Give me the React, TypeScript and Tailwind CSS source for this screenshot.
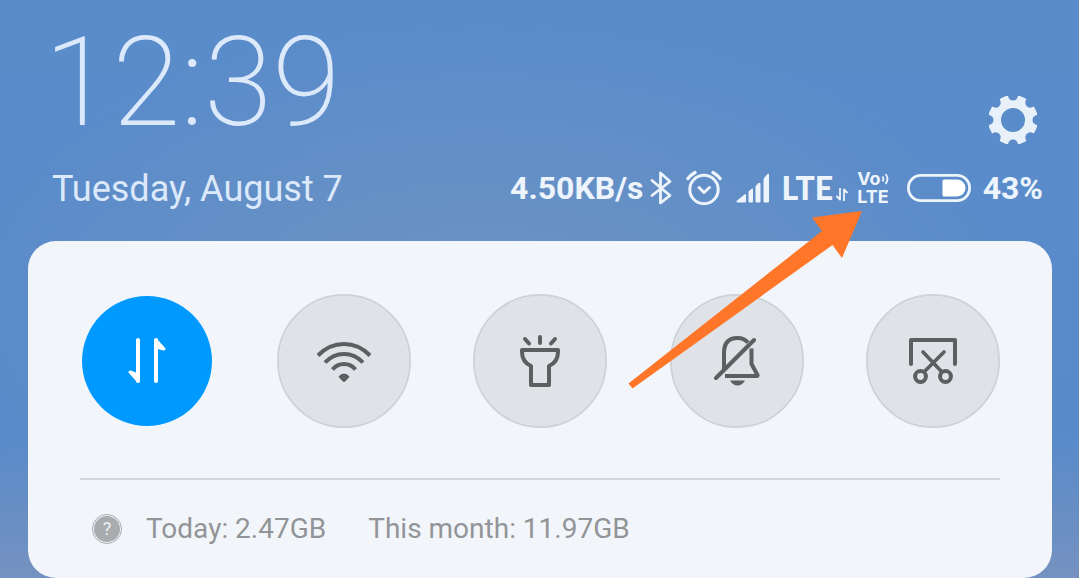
import React from "react";

type IconProps = {
  className?: string;
};

const BluetoothIcon = ({ className }: IconProps) => (
  <svg className={className} viewBox="0 0 22 34" fill="none" stroke="currentColor" strokeWidth="2.8" strokeLinejoin="round" strokeLinecap="round" aria-hidden="true">
    <path d="M2 9.5 20 24.5 10.500 32V2L20 10.5 2 24.5" />
  </svg>
);

const AlarmIcon = ({ className }: IconProps) => (
  <svg className={className} viewBox="0 0 36 36" fill="none" stroke="currentColor" strokeWidth="3" strokeLinecap="round" strokeLinejoin="round" aria-hidden="true">
    <circle cx="18" cy="19.5" r="14.2" />
    <path d="M2 8.5Q4.500 5 9 2.500M34 8.500Q31.500 5 27 2.500" strokeWidth="3.400" />
    <path d="M13 17.500 18 22.500 23.500 17.500" />
  </svg>
);

const SignalIcon = ({ className }: IconProps) => (
  <svg className={className} viewBox="0 0 34 30" fill="currentColor" aria-hidden="true">
    <path d="M1 27.500 8.500 21.500Q10 20.500 10 22V28.500Q10 29.500 9 29.500H2Q-.5 29.500 1 27.500Z" />
    <path d="M12.500 19Q12.500 18 13.500 17.500L15.500 16Q17 15 17 16.500V28.500Q17 29.500 16 29.500H13.500Q12.500 29.500 12.500 28.500Z" />
    <path d="M19.500 14Q19.500 13 20.500 12L22.500 10Q24.500 9 24.500 11V28.500Q24.500 29.500 23.500 29.500H20.500Q19.500 29.500 19.500 28.500Z" />
    <path d="M27.500 7Q27.500 5.500 28.500 4.500L31 1.500Q33 0 33 2V28.500Q33 29.500 32 29.500H28.500Q27.500 29.500 27.500 28.500Z" />
  </svg>
);

const DataArrowsIcon = ({ className }: IconProps) => (
  <svg className={className} viewBox="0 0 38 48" fill="currentColor" stroke="currentColor" strokeLinejoin="round" strokeLinecap="round" aria-hidden="true">
    <path d="M10 3V44" strokeWidth="4" />
    <path d="M10 44 2 35 10 38Z" strokeWidth="3" />
    <path d="M28 3V44" strokeWidth="4" />
    <path d="M28 3 36 12 28 10Z" strokeWidth="3" />
  </svg>
);

const SmallArrowsIcon = ({ className }: IconProps) => (
  <svg className={className} viewBox="0 0 14 13" fill="none" stroke="currentColor" strokeWidth="1.800" strokeLinejoin="round" aria-hidden="true">
    <path d="M5 0V11.500L1.500 8M9 13V1.500L12.500 5" />
  </svg>
);

const BatteryIcon = ({ className }: IconProps) => (
  <svg className={className} viewBox="0 0 64 28" fill="none" aria-hidden="true">
    <rect x="1.400" y="1.400" width="61.200" height="25.200" rx="12.600" stroke="currentColor" strokeWidth="2.800" />
    <path d="M37 5.500H50A8.500 8.500 0 0 1 50 22.500H37Q35.500 22.500 35.500 21V7Q35.500 5.500 37 5.500Z" fill="white" />
  </svg>
);

// eight teeth with scooped gaps between them
const GearIcon = ({ className }: IconProps) => (
  <svg className={className} viewBox="-24 -24 48 48" fill="currentColor" aria-hidden="true">
    <path
      fillRule="evenodd"
      d="M-5 -24Q-4 -19.500 0 -19.500Q4 -19.500 5 -24H7L12.500 -21.500L13.400 -20.500Q11 -17 13.800 -13.800Q17 -11 20.500 -13.400L21.500 -12.500L24 -7V-5Q19.500 -4 19.500 0Q19.500 4 24 5V7L21.500 12.500L20.500 13.400Q17 11 13.800 13.800Q11 17 13.400 20.500L12.500 21.500L7 24H5Q4 19.500 0 19.500Q-4 19.500 -5 24H-7L-12.500 21.500L-13.400 20.500Q-11 17 -13.800 13.800Q-17 11 -20.500 13.400L-21.500 12.500L-24 7V5Q-19.500 4 -19.500 0Q-19.500 -4 -24 -5V-7L-21.500 -12.500L-20.500 -13.400Q-17 -11 -13.800 -13.800Q-11 -17 -13.400 -20.500L-12.500 -21.500L-7 -24ZM0 -12A12 12 0 1 0 0 12A12 12 0 1 0 0 -12Z"
    />
  </svg>
);

const WifiIcon = () => (
  <svg className="h-[42px] w-14" viewBox="0 0 56 42" fill="none" stroke="currentColor" strokeWidth="4" aria-hidden="true">
    <path d="M2 15.500Q13 4 28 4T54 15.500" />
    <path d="M9 22.500Q17 14 28 14T47 22.500" />
    <path d="M16.500 29.500Q21 24 28 24T39.500 29.500" />
    <path d="M22.500 36.500Q25 33.500 28 33.500T33.500 36.500Q33 38 28 42.500Q23 38 22.500 36.500Z" fill="currentColor" stroke="none" />
  </svg>
);

const TorchIcon = () => (
  <svg className="h-[52px] w-10" viewBox="0 0 40 52" fill="none" stroke="currentColor" strokeWidth="4" strokeLinecap="round" strokeLinejoin="round" aria-hidden="true">
    <path d="M2 15H38V17Q38 27 29 31V50H11V31Q2 27 2 17Z" />
    <path d="M20 2V8M5 4 9 8.500M35 4 31 8.500" />
  </svg>
);

const SilentIcon = () => (
  <svg className="h-[50px] w-[46px]" viewBox="0 0 46 50" fill="none" stroke="currentColor" strokeWidth="4" strokeLinejoin="round" aria-hidden="true">
    <path d="M10 34V17Q10 2 23.500 2Q30 2 34 6.500" />
    <path d="M37.500 12.500V28L43.500 39Q44 40 42 40H11" />
    <path d="M2 42 40 4" strokeLinecap="round" />
    <path d="M16 44.500H31Q28 49.500 23.500 49.500T16 44.500Z" fill="currentColor" stroke="none" />
  </svg>
);

const ScreenshotIcon = () => (
  <svg className="h-[46px] w-12" viewBox="0 0 48 46" fill="none" stroke="currentColor" strokeWidth="4" strokeLinecap="round" strokeLinejoin="round" aria-hidden="true">
    <path d="M2 26V2H46V26" />
    <path d="M14 14 32 33M35 14 16 33" strokeWidth="3.600" />
    <circle cx="11.500" cy="38.500" r="5.400" />
    <circle cx="36.500" cy="38.500" r="5.400" />
  </svg>
);

const toggles = [
  { label: "Mobile data", icon: <DataArrowsIcon className="h-12 w-[38px]" />, active: true },
  { label: "Wi-Fi", icon: <WifiIcon />, active: false },
  { label: "Torch", icon: <TorchIcon />, active: false },
  { label: "Silent", icon: <SilentIcon />, active: false },
  { label: "Screenshot", icon: <ScreenshotIcon />, active: false },
];

const StatusBar = () => (
  <div className="flex items-center text-[32px] leading-[44px] font-bold text-[#edf4fc]">
    <span>4.50KB/s</span>
    <BluetoothIcon className="ml-[6px] h-[34px] w-[22px]" />
    <AlarmIcon className="ml-[14px] h-9 w-9" />
    <SignalIcon className="ml-[14px] h-[30px] w-[34px]" />
    <span className="ml-3 font-[Lato,sans-serif] font-black">LTE</span>
    <SmallArrowsIcon className="mt-3 ml-[2px] h-[13px] w-[14px]" />
    <div className="ml-2 flex flex-col font-[Inter,sans-serif] text-[18px] leading-[18px]">
      <span className="flex items-center">
        Vo
        <svg className="h-3 w-2" viewBox="0 0 8 12" fill="none" stroke="currentColor" strokeWidth="1.800" aria-hidden="true">
          <path d="M1.500 3.500Q3.500 6 1.500 8.500M4.500 1Q8.500 6 4.500 11" />
        </svg>
      </span>
      <span>LTE</span>
    </div>
    <BatteryIcon className="ml-[18px] h-7 w-16" />
    <span className="ml-3">43%</span>
  </div>
);

export default function App() {
  return (
    <div className="relative min-h-screen overflow-hidden bg-[#5b8bc9] bg-[radial-gradient(ellipse_at_45%_55%,#6d93c4_0%,#6590c6_30%,transparent_65%),linear-gradient(to_bottom,#5b8cca_0%,#588aca_75%,#7592c0_100%)] font-[Roboto,sans-serif]">
      <header className="pt-5 pr-9 pl-[52px] text-[#dce9fa]">
        <div className="flex items-end justify-between">
          <time className="-ml-2 text-[124px] leading-[126px] font-extralight">12:39</time>
          <button aria-label="Settings" className="mr-[6px] mb-[2px] text-[#e8f0fa]">
            <GearIcon className="h-12 w-12" />
          </button>
        </div>
        <div className="mt-5 flex items-start justify-between">
          <span className="text-[36px] leading-[46px]">Tuesday, August 7</span>
          <StatusBar />
        </div>
      </header>

      <main className="mr-[27px] ml-7 mt-[29px] rounded-[28px] bg-[#f2f6fb] px-[52px] pt-[53px] pb-7">
        <div className="flex justify-between">
          {toggles.map(({ label, icon, active }) => (
            <button
              key={label}
              aria-label={label}
              aria-pressed={active}
              className={`flex h-[134px] w-[134px] items-center justify-center rounded-full border-2 bg-clip-padding ${
                active
                  ? "border-transparent bg-[#0099ff] text-white"
                  : "border-[#cfd2d6] bg-[#dfe2e7] text-[#5c5e60]"
              }`}
            >
              {icon}
            </button>
          ))}
        </div>
        <hr className="mt-[50px] border-t-2 border-[#d3d6dc]" />
        <div className="mt-7 flex items-center pl-3 text-[28px] leading-[42px] text-[#929497]">
          <button
            aria-label="Data usage help"
            className="flex h-[30px] w-[30px] items-center justify-center rounded-full border border-[#a9abae] p-[1px]"
          >
            <span className="flex h-full w-full items-center justify-center rounded-full bg-[#a9abae] text-[18px] leading-none text-[#eef1f5]">
              ?
            </span>
          </button>
          <span className="ml-6">Today: 2.47GB</span>
          <span className="ml-[42px]">This month: 11.97GB</span>
        </div>
      </main>

      <svg
        className="pointer-events-none absolute top-[211px] right-[217px] h-[178px] w-[234px]"
        viewBox="0 0 234 178"
        fill="#ff7628"
        aria-hidden="true"
      >
        <path d="M0.500 172.500 194 20 184 6.500 234 0 214 47 204.500 34 4.500 177.500Z" />
      </svg>
    </div>
  );
}
